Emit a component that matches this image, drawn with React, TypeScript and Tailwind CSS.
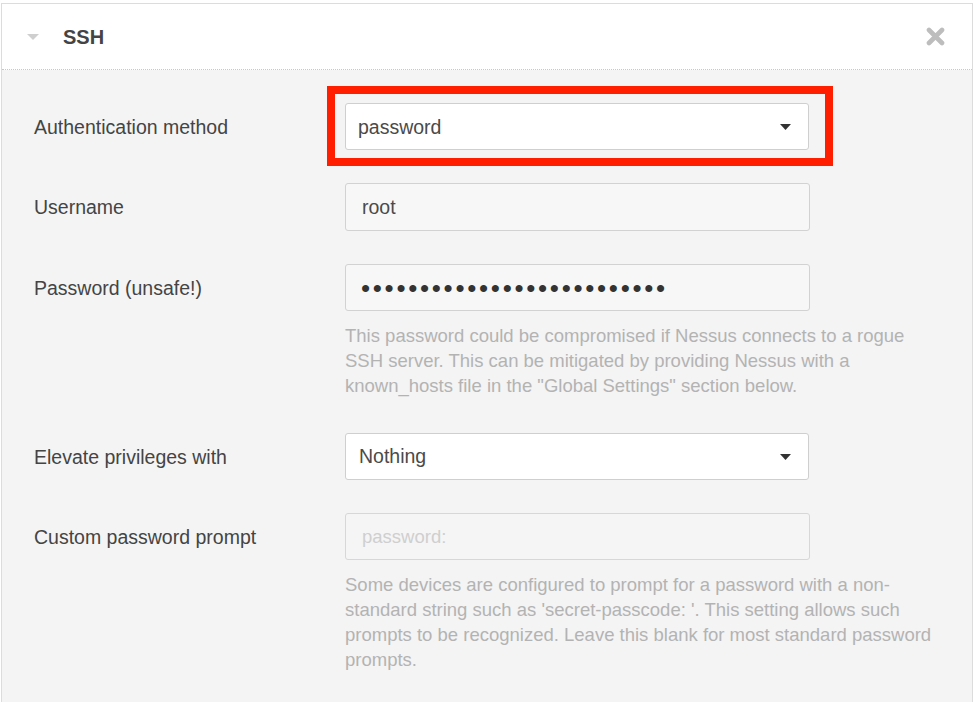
import React from "react";

const Arrow = () => (
  <svg width="11" height="6" viewBox="0 0 11 6" className="absolute right-[17px] top-1/2 -translate-y-1/2">
    <path d="M0 0 H11 L5.5 6 Z" fill="#333" />
  </svg>
);

function Label({ children }: { children: React.ReactNode }) {
  return (
    <div className="h-[47px] pt-[2px] flex items-center text-[19.5px] text-[#444]">{children}</div>
  );
}

export default function App() {
  return (
    <div
      className="min-h-screen bg-white"
      style={{ fontFamily: '"Liberation Sans", Arial, sans-serif' }}
    >
      <div className="ml-[1px] mt-[3px] w-[972px] border border-b-0 border-[#dcdcdc]">
        <header className="h-[66px] bg-white border-b border-dotted border-[#c8c8c8] flex items-center">
          <div className="ml-[25px] w-0 h-0 border-l-[6.5px] border-r-[6.5px] border-t-[6px] border-l-transparent border-r-transparent border-t-[#cfcfcf]" />
          <div className="ml-[24px] text-[20px] font-bold text-[#444]">SSH</div>
          <div className="ml-auto mr-[27px]">
            <svg width="19" height="19" viewBox="0 0 19 19">
              <path d="M3 3 L16 16 M16 3 L3 16" stroke="#bdbdbd" strokeWidth="4.6" strokeLinecap="round" />
            </svg>
          </div>
        </header>
        <div className="bg-[#f4f4f4] pl-[32px] pt-[33px] pb-[40px]">
          <div className="grid grid-cols-[311px_1fr] gap-y-[33px]">
            <Label>Authentication method</Label>
            <div className="relative w-[464px]">
              <div className="absolute -left-[18px] -top-[17px] w-[506px] h-[80px] border-[8px] border-[#ff1f00]" />
              <div className="relative h-[47px] bg-white border border-[#cfcfcf] rounded-[3px] flex items-center pl-[12px] pt-[2px] text-[19.5px] text-[#4a4a4a]">
                password
                <Arrow />
              </div>
            </div>

            <Label>Username</Label>
            <div className="w-[465px] h-[48px] bg-[#f7f7f7] border border-[#d2d2d2] rounded-[3px] flex items-center pl-[16px] pt-[1px] text-[19.5px] text-[#4a4a4a]">
              root
            </div>

            <Label>Password (unsafe!)</Label>
            <div>
              <div className="w-[465px] h-[47px] bg-[#f7f7f7] border border-[#d2d2d2] rounded-[3px] flex items-center pl-[15px] text-[#333]">
                <span className="text-[26px] tracking-[2.7px] leading-none">••••••••••••••••••••••••••</span>
              </div>
              <div className="mt-[12px] mb-[2px] text-[18.5px] leading-[25px] text-[#b3b3b3]">
                This password could be compromised if Nessus connects to a rogue
                <br />
                SSH server. This can be mitigated by providing Nessus with a
                <br />
                known_hosts file in the "Global Settings" section below.
              </div>
            </div>

            <Label>Elevate privileges with</Label>
            <div className="relative w-[464px] h-[47px] bg-white border border-[#cfcfcf] rounded-[3px] flex items-center pl-[13px] pt-[1px] text-[19.5px] text-[#4a4a4a]">
              Nothing
              <Arrow />
            </div>

            <Label>Custom password prompt</Label>
            <div>
              <div className="w-[465px] h-[47px] bg-[#f5f5f5] border border-[#d7d7d7] rounded-[3px] flex items-center pl-[16px] text-[18.5px] text-[#cfcfcf]">
                password:
              </div>
              <div className="mt-[12px] text-[18.5px] leading-[25px] text-[#b3b3b3]">
                Some devices are configured to prompt for a password with a non-
                <br />
                standard string such as 'secret-passcode: '. This setting allows such
                <br />
                prompts to be recognized. Leave this blank for most standard password
                <br />
                prompts.
              </div>
            </div>
          </div>
        </div>
      </div>
    </div>
  );
}
